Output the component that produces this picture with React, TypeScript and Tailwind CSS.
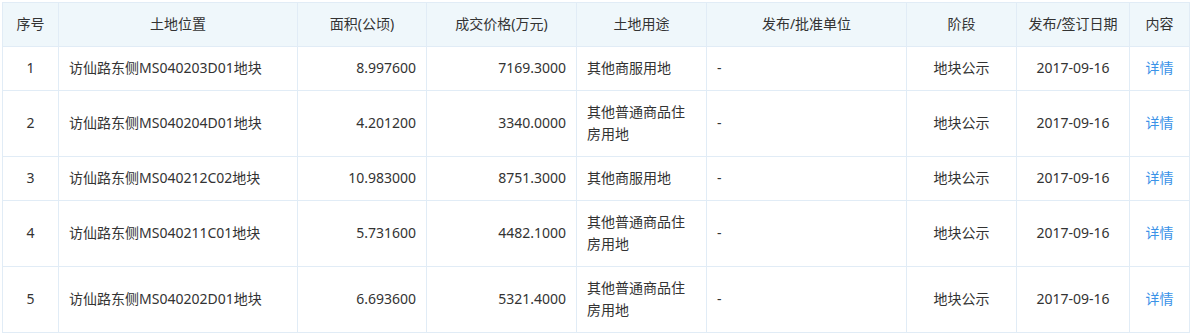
import React from "react";

const rows = [
  { n: "1", loc: "访仙路东侧MS040203D01地块", area: "8.997600", price: "7169.3000", use: "其他商服用地" },
  { n: "2", loc: "访仙路东侧MS040204D01地块", area: "4.201200", price: "3340.0000", use: "其他普通商品住房用地" },
  { n: "3", loc: "访仙路东侧MS040212C02地块", area: "10.983000", price: "8751.3000", use: "其他商服用地" },
  { n: "4", loc: "访仙路东侧MS040211C01地块", area: "5.731600", price: "4482.1000", use: "其他普通商品住房用地" },
  { n: "5", loc: "访仙路东侧MS040202D01地块", area: "6.693600", price: "5321.4000", use: "其他普通商品住房用地" },
];

const widths = [56, 239, 129, 150, 130, 200, 110, 113, 60];

export default function App() {
  const cell = "border border-[#e1ecf6] pt-[10px] pb-[11px] px-[10px] leading-[22px] align-middle";
  return (
    <div
      className="w-[1192px] h-[335px] bg-white pt-[2px] pl-[2px] text-[14px] text-[#333333]"
      style={{ fontFamily: '"Noto Sans", "Noto Sans CJK SC", sans-serif' }}
    >
      <table className="table-fixed border-collapse w-[1188px]">
        <colgroup>
          {widths.map((w, i) => (
            <col key={i} style={{ width: w }} />
          ))}
        </colgroup>
        <thead>
          <tr className="bg-[#eff7fb]">
            <th className={`${cell} font-normal text-center`}>序号</th>
            <th className={`${cell} font-normal text-center`}>土地位置</th>
            <th className={`${cell} font-normal text-center`}>面积(公顷)</th>
            <th className={`${cell} font-normal text-center`}>成交价格(万元)</th>
            <th className={`${cell} font-normal text-center`}>土地用途</th>
            <th className={`${cell} font-normal text-center`}>发布/批准单位</th>
            <th className={`${cell} font-normal text-center`}>阶段</th>
            <th className={`${cell} font-normal text-center px-0`}>发布/签订日期</th>
            <th className={`${cell} font-normal text-center`}>内容</th>
          </tr>
        </thead>
        <tbody>
          {rows.map((r) => (
            <tr key={r.n}>
              <td className={`${cell} text-center`}>{r.n}</td>
              <td className={`${cell} text-left`}>{r.loc}</td>
              <td className={`${cell} text-right`}>{r.area}</td>
              <td className={`${cell} text-right`}>{r.price}</td>
              <td className={`${cell} text-left`}>{r.use}</td>
              <td className={`${cell} text-left`}>-</td>
              <td className={`${cell} text-center`}>地块公示</td>
              <td className={`${cell} text-center`}>2017-09-16</td>
              <td className={`${cell} text-center text-[#3a92e8]`}>详情</td>
            </tr>
          ))}
        </tbody>
      </table>
    </div>
  );
}
